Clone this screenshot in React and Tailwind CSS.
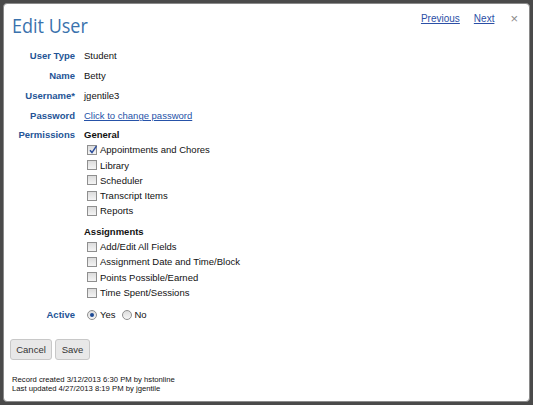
import React from "react";

const sans = { fontFamily: '"Liberation Sans", Arial, sans-serif' };

function Checkbox({ checked }) {
  return (
    <span className="relative ml-[3px] mr-[3px] inline-block h-[10px] w-[10px] shrink-0 border border-[#8f8f8f] bg-gradient-to-b from-[#dcdcdc] to-[#f4f4f4]">
      {checked && (
        <svg viewBox="0 0 10 10" className="absolute left-[0px] top-[-1px] h-[10px] w-[10px]">
          <path d="M2 5.2 L4 7.6 L8.4 1.2" fill="none" stroke="#2a4c9c" strokeWidth="1.5" />
        </svg>
      )}
    </span>
  );
}

function Radio({ checked }) {
  return (
    <span className="relative ml-[3px] mr-[3px] inline-flex h-[10px] w-[10px] shrink-0 items-center justify-center rounded-full border border-[#8f8f8f] bg-gradient-to-b from-[#dcdcdc] to-[#f6f6f6]">
      {checked && <span className="h-[4px] w-[4px] rounded-full bg-[#1d4a95]" />}
    </span>
  );
}

function Row({ label, children }) {
  return (
    <div className="flex h-[20px] items-center">
      <div className="w-[63px] text-right font-bold text-[#245496]">{label}</div>
      <div className="ml-[9px] flex items-center text-[#111]">{children}</div>
    </div>
  );
}

function CheckRow({ label, checked }) {
  return (
    <div className="flex h-[15.2px] items-center">
      <Checkbox checked={checked} />
      <span>{label}</span>
    </div>
  );
}

export default function App() {
  const general = [
    ["Appointments and Chores", true],
    ["Library", false],
    ["Scheduler", false],
    ["Transcript Items", false],
    ["Reports", false],
  ];
  const assignments = [
    "Add/Edit All Fields",
    "Assignment Date and Time/Block",
    "Points Possible/Earned",
    "Time Spent/Sessions",
  ];

  return (
    <div className="h-[405px] w-[533px] bg-[#4a4a4a] p-[3px]" style={sans}>
      <div className="relative h-full w-full rounded-[4px] border border-[#8a8a8a] bg-white text-[9.5px] leading-none">
        {/* header */}
        <div className="flex h-[42px] items-start justify-between pl-[8px] pr-[11px]">
          <h1
            className="origin-bottom scale-y-[1.15] pt-[9px] text-[18px] font-normal leading-[28px] text-[#3a72ad]"
            style={{ fontFamily: '"Open Sans", "Segoe UI", sans-serif' }}
          >
            Edit User
          </h1>
          <div className="flex items-center pt-[8px] text-[10px]">
            <a className="text-[#2b4fa6] underline">Previous</a>
            <a className="ml-[14px] text-[#2b4fa6] underline">Next</a>
            <span className="ml-[16px] text-[13px] text-[#8a8a8a]">×</span>
          </div>
        </div>

        {/* form */}
        <div className="pl-[8px]">
          <Row label="User Type">Student</Row>
          <Row label="Name">Betty</Row>
          <Row label="Username*">jgentile3</Row>
          <Row label="Password">
            <a className="text-[#2652a8] underline">Click to change password</a>
          </Row>

          <div className="mt-[1.5px] flex">
            <div className="flex h-[15px] w-[63px] items-center justify-end font-bold text-[#245496]">
              Permissions
            </div>
            <div className="ml-[9px] text-[#111]">
              <div className="flex h-[15px] items-center font-bold">General</div>
              {general.map(([label, checked]) => (
                <CheckRow key={label} label={label} checked={checked} />
              ))}
              <div className="mt-[6px] flex h-[15px] items-center font-bold">Assignments</div>
              {assignments.map((label) => (
                <CheckRow key={label} label={label} />
              ))}
            </div>
          </div>

          <div className="mt-[5px]">
            <Row label="Active">
              <Radio checked />
              <span>Yes</span>
              <span className="ml-[3px]" />
              <Radio />
              <span>No</span>
            </Row>
          </div>
        </div>

        {/* actions */}
        <div className="mt-[14px] flex gap-[3px] pl-[6px]">
          <button className="h-[21px] w-[42px] rounded-[3px] border border-[#c8c8c8] bg-[#e8e8e8] text-[9.5px] text-[#333]">
            Cancel
          </button>
          <button className="h-[21px] w-[35px] rounded-[3px] border border-[#c8c8c8] bg-[#e8e8e8] text-[9.5px] text-[#333]">
            Save
          </button>
        </div>

        {/* audit trail */}
        <div className="mt-[16px] pl-[8px] text-[7.7px] leading-[8.5px] text-[#111]">
          <div>Record created 3/12/2013 6:30 PM by hstonline</div>
          <div>Last updated 4/27/2013 8:19 PM by jgentile</div>
        </div>
      </div>
    </div>
  );
}
